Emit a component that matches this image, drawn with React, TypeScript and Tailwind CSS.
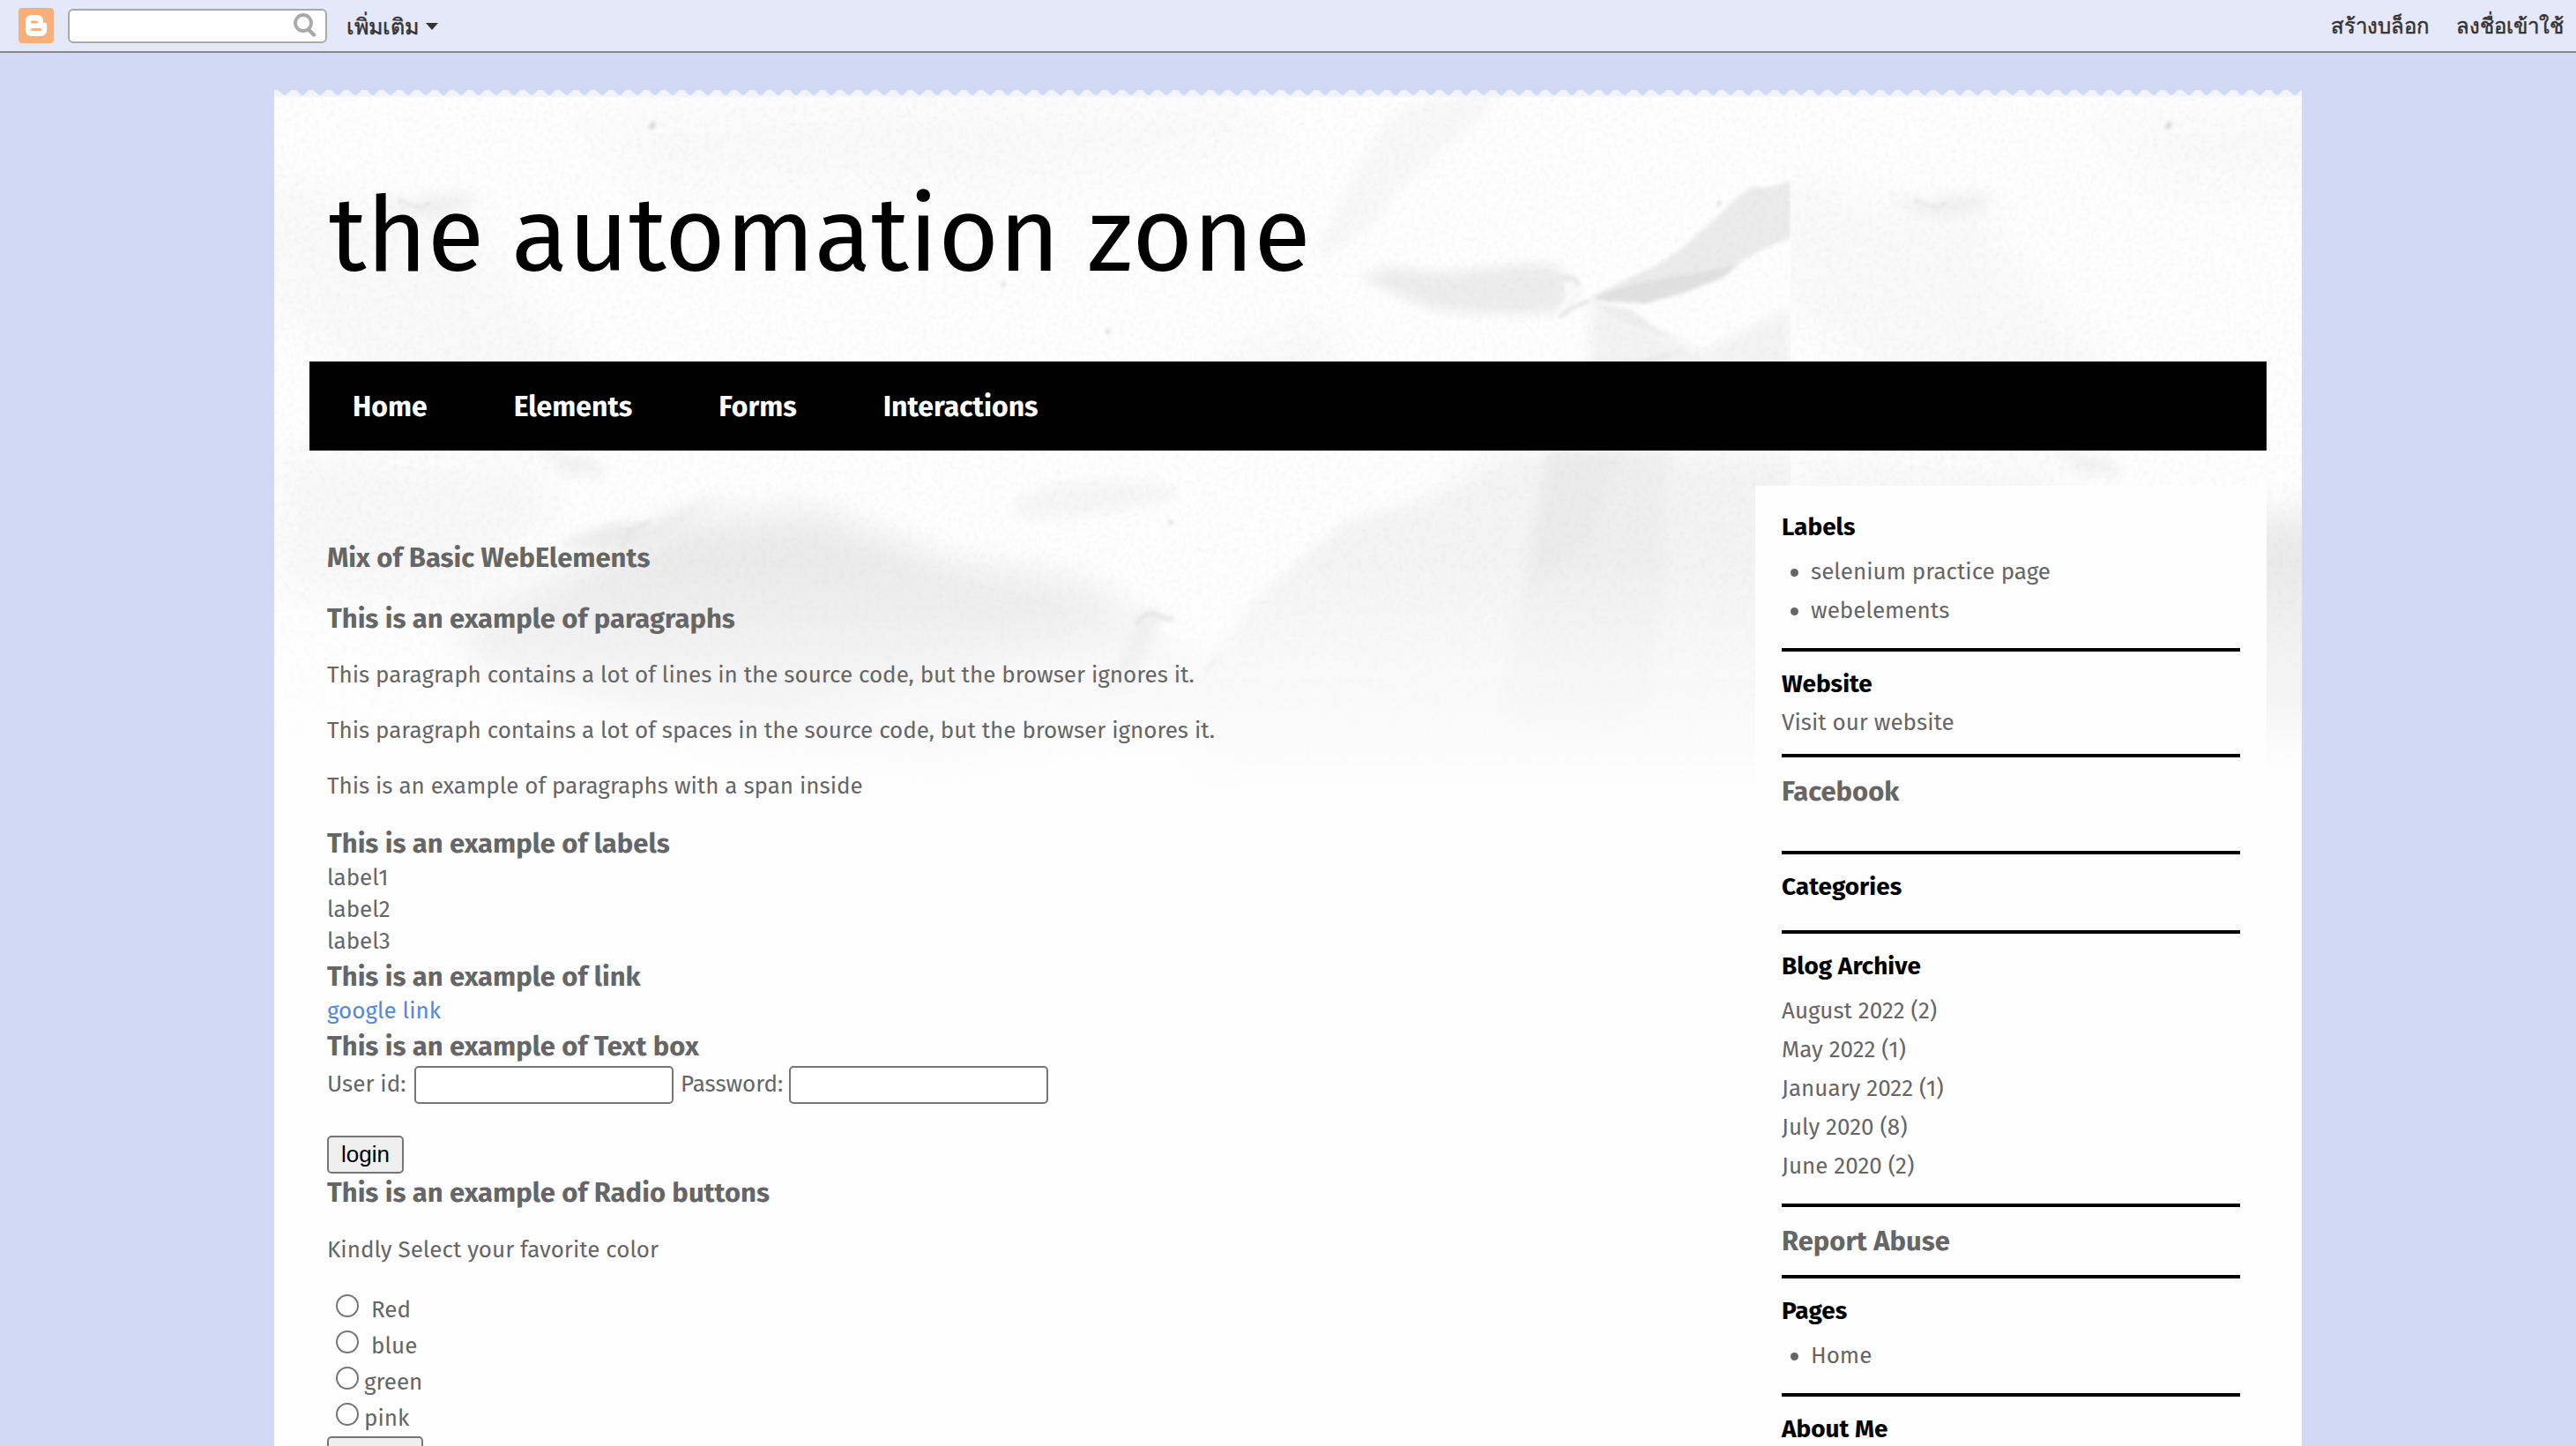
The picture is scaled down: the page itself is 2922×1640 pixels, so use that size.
import type { ReactNode } from "react";

function BloggerLogo() {
  return (
    <svg viewBox="0 0 40 40" className="size-10" aria-hidden="true">
      <rect width="40" height="40" rx="4" fill="#f5b07c" />
      <path
        fill="#fff"
        d="M15 8h6.500c4 0 6.500 3 6.500 6.500v1.200c0 .9.600 1.300 1.500 1.300h1.300c.9 0 1.400.5 1.400 1.400v6.400c0 4.200-3 7.200-7.200 7.200H15c-4.200 0-7-3-7-7.200V15.200C8 11 10.800 8 15 8z"
      />
      <path d="M15.500 16h5M15.500 24.500h9" stroke="#f5b07c" strokeWidth="3.200" strokeLinecap="round" />
    </svg>
  );
}

function SearchIcon() {
  return (
    <svg viewBox="0 0 26 28" className="h-7 w-[26px]" fill="none" stroke="#a9a9a9" aria-hidden="true">
      <ellipse cx="11" cy="11" rx="9" ry="9" strokeWidth="3.800" />
      <path d="M17 18.500l6 6" strokeWidth="4.500" strokeLinecap="round" />
    </svg>
  );
}

function TornEdge() {
  return (
    <svg className="block h-2 w-full" aria-hidden="true">
      <defs>
        <pattern id="teeth" width="20" height="8" patternUnits="userSpaceOnUse">
          <path d="M0 0h4L11 6h2L19 0.500 20 0V8H0z" fill="#fff" fillOpacity="0.720" />
        </pattern>
      </defs>
      <rect width="100%" height="8" fill="url(#teeth)" />
    </svg>
  );
}

function CrumpledPaper() {
  return (
    <svg className="absolute inset-x-0 top-2 -z-10 h-[850px] w-full" aria-hidden="true">
      <defs>
        <filter id="soft" x="-20%" y="-20%" width="140%" height="140%">
          <feGaussianBlur stdDeviation="20" />
        </filter>
        <filter id="mid" x="-20%" y="-20%" width="140%" height="140%">
          <feGaussianBlur stdDeviation="7" />
        </filter>
        <filter id="crisp" x="-20%" y="-20%" width="140%" height="140%">
          <feGaussianBlur stdDeviation="2" />
        </filter>
        <filter id="grain" x="0" y="0" width="100%" height="100%">
          <feTurbulence type="fractalNoise" baseFrequency="0.170" numOctaves="2" seed="4" />
          <feColorMatrix values="0 0 0 0 0.500  0 0 0 0 0.500  0 0 0 0 0.500  0.200 0 0 0 -0.090" />
        </filter>
        <linearGradient id="fade" x1="0" y1="0" x2="0" y2="1">
          <stop offset="0.620" stopColor="#fff" />
          <stop offset="0.760" stopColor="#fff" stopOpacity="0.550" />
          <stop offset="0.940" stopColor="#fff" stopOpacity="0" />
        </linearGradient>
        <mask id="fadeMask" maskUnits="userSpaceOnUse" x="0" y="0" width="3440" height="850">
          <rect width="3440" height="850" fill="url(#fade)" />
        </mask>
        <clipPath id="sheetClip">
          <rect width="1720" height="850" />
        </clipPath>
        <g id="sheet" clipPath="url(#sheetClip)">
          <g filter="url(#soft)">
            <path d="M-20 80L110 120 220 112 260 200 380 310 300 420 120 330-20 240z" fill="#f9f9f9" />
            <path d="M330 20L700-10 1120 0 1140 60 800 120 420 110z" fill="#fafafa" />
            <path d="M210 600L460 480 614 470 768 530 908 550 985 590 980 650 900 720 768 760 500 730 219 640z" fill="#eaeaea" />
            <path d="M0 400L280 420 330 460 200 600 0 560z" fill="#f8f8f8" />
            <path d="M980 600L1060 640 1060 720 780 730 600 700z" fill="#f4f4f4" />
            <path d="M1050 310L1180 250 1220 300 1150 330 1020 340z" fill="#f8f8f8" />
            <path d="M1280 480L1405 400 1740 400V800H1050V700L1120 600z" fill="#f3f3f3" />
          </g>
          <g filter="url(#mid)">
            <path d="M1286 8L1400-10 1340 50 1280 100 1240 150 1195 180 1178 183 1210 117 1244 50z" fill="#f8f8f8" />
            <path d="M1405 412L1352 438 1312 461 1220 478 1153 534 1107 578 1062 650 1040 740 1400 740 1430 600 1450 412z" fill="#f4f4f4" />
            <path d="M1445 400H1584L1577 528 1558 700 1480 740 1390 700 1425 511z" fill="#efefef" />
            <path d="M1445 400H1530L1500 500 1425 560 1425 511z" fill="#ebebeb" />
            <path d="M840 458Q880 432 960 435T1020 455Q940 480 840 478z" fill="#f6f6f6" />
            <path d="M1494 232L1560 262 1620 290 1720 240V340H1490z" fill="#f3f3f3" />
            <path d="M318 508L384 484 428 486 515 448 439 500 395 514z" fill="#ebebeb" />
            <path d="M110 110L150 122 190 110 230 112 220 126 180 138 140 132z" fill="#f1f1f1" />
            <path d="M300 400L360 410 380 430 330 428z" fill="#f1f1f1" />
            <path d="M975 600Q985 580 1005 586L980 655 940 680z" fill="#e9e9e9" />
            <path d="M1234 205Q1260 190 1290 196T1390 193 1461 199L1477 213 1456 245Q1400 248 1357 245T1296 233 1234 207z" fill="#ececec" />
          </g>
          <g filter="url(#crisp)">
            <path d="M1494 227Q1530 208 1555 197T1602 167 1650 123 1683 102 1720 95V160Q1690 170 1664 187L1650 200 1602 220 1555 235z" fill="#ebebeb" />
            <path d="M1494 228Q1540 210 1590 203T1660 190L1645 204 1600 222 1555 234 1510 232z" fill="#e0e0e0" />
            <path d="M1494 234L1540 241Q1570 268 1600 280L1530 256z" fill="#eeeeee" />
            <path d="M1490 310V300Q1540 300 1565 294T1600 287Q1570 300 1560 310z" fill="#ebebeb" />
            <path d="M1462 208L1478 210 1488 224 1466 240 1456 246 1466 228z" fill="#fafafa" />
            <path d="M1460 206L1474 205 1480 214M1458 250L1472 239 1492 231" fill="none" stroke="#dddddd" strokeWidth="3" />
            <path d="M978 598Q990 582 1000 587T1020 592" fill="none" stroke="#dedede" strokeWidth="5" />
            <path d="M1000 602L1025 597 1050 612 1035 618z" fill="#fdfdfd" />
            <path d="M1057 654L1068 636" stroke="#d8d8d8" strokeWidth="2" />
            <path d="M395 512L402 492 425 482" fill="none" stroke="#e3e3e3" strokeWidth="3" />
            <path d="M140 116L165 126 178 120" fill="none" stroke="#e6e6e6" strokeWidth="3" />
            <path d="M427 36l4-7M1016 481l2 3M1638 119l2 3M826 211l2 3M945 264l1 4" stroke="#c8c8c8" strokeWidth="4" />
          </g>
          <rect width="1720" height="850" filter="url(#grain)" />
        </g>
      </defs>
      <g mask="url(#fadeMask)">
        <use href="#sheet" />
        <use href="#sheet" x="1720" />
      </g>
    </svg>
  );
}

function Heading({ children, className = "" }: { children: ReactNode; className?: string }) {
  return <h3 className={`text-[31px] leading-[43px] font-bold ${className}`}>{children}</h3>;
}

function Widget({ title, children, className = "pb-5" }: { title: string; children?: ReactNode; className?: string }) {
  return (
    <section className={`border-b-4 border-black pt-[17px] ${className}`}>
      <h2 className="text-[28px] leading-10 font-bold text-black">{title}</h2>
      {children}
    </section>
  );
}

const field = "h-[43px] w-[294px] rounded-[5px] border-2 border-[#767676] bg-white px-1";
const button =
  "h-[43px] rounded-[5px] border-2 border-[#767676] bg-[#efefef] px-[14px] font-['Liberation_Sans',sans-serif] leading-[39px] text-black";

const archive = ["August 2022 (2)", "May 2022 (1)", "January 2022 (1)", "July 2020 (8)", "June 2020 (2)"];
const colors = [
  { id: "red", label: "Red", gap: "ml-[14px]" },
  { id: "blue", label: "blue", gap: "ml-[14px]" },
  { id: "green", label: "green", gap: "ml-[6px]" },
  { id: "pink", label: "pink", gap: "ml-[6px]" },
];

function BulletList({ items }: { items: string[] }) {
  return (
    <ul className="mt-[9px] leading-[44px]">
      {items.map((item) => (
        <li key={item} className="flex items-center pl-[10px]">
          <span className="mr-[14px] size-[9px] rounded-full bg-[#666]" />
          <a href="#">{item}</a>
        </li>
      ))}
    </ul>
  );
}

export default function App() {
  return (
    <div className="flex h-screen flex-col overflow-hidden bg-[#d2d9f5] font-['Fira_Sans','Open_Sans',sans-serif] text-[26px] leading-[36px] text-[#666]">
      <header className="flex h-[60px] shrink-0 items-center border-b-2 border-[#88888c] bg-[#e4e8f9] pr-[14px] pl-[21px] font-['Liberation_Sans',sans-serif] text-[26px] font-medium text-[#333]">
        <a href="#" aria-label="Blogger">
          <BloggerLogo />
        </a>
        <form className="ml-4 flex h-[39px] w-[294px] items-center rounded-[6px] border-2 border-[#a9a9a9] bg-white pr-[10px]">
          <input type="text" aria-label="Search this blog" className="h-full min-w-0 flex-1 px-2 outline-none" />
          <button type="button" aria-label="Search">
            <SearchIcon />
          </button>
        </form>
        <button type="button" className="ml-[22px] flex items-center gap-2 pt-px text-[25px] [-webkit-text-stroke:0.5px_#333]">
          เพิ่มเติม
          <svg viewBox="0 0 14 8" className="h-2 w-[14px]" fill="#333" aria-hidden="true">
            <path d="M0 0h14L7 8z" />
          </svg>
        </button>
        <nav className="ml-auto flex gap-[30px] pt-px text-[24px] [-webkit-text-stroke:0.5px_#333]">
          <a href="#">สร้างบล็อก</a>
          <a href="#">ลงชื่อเข้าใช้</a>
        </nav>
      </header>

      <div className="relative isolate mx-auto mt-[42px] flex w-full max-w-[2300px] flex-1 flex-col">
        <TornEdge />
        <div className="absolute inset-x-0 top-2 bottom-0 -z-20 bg-[#fefefe]" />
        <CrumpledPaper />

        <h1 className="px-[62px] pt-[86px] pb-[70px] text-[118px] leading-[144px] text-black">the automation zone</h1>

        <nav className="mx-10 flex h-[101px] shrink-0 items-center bg-black text-[32px] font-bold text-white">
          {["Home", "Elements", "Forms", "Interactions"].map((item) => (
            <a key={item} href="#" className="px-[49px]">
              {item}
            </a>
          ))}
        </nav>

        <div className="mx-10 mt-10 flex min-h-0 flex-1">
          <main className="flex-1 px-5 pt-[60px]">
            <Heading>Mix of Basic WebElements</Heading>
            <Heading className="mt-[26px]">This is an example of paragraphs</Heading>
            <div className="my-[25px] flex flex-col gap-[27px]">
              <p>This paragraph contains a lot of lines in the source code, but the browser ignores it.</p>
              <p>This paragraph contains a lot of spaces in the source code, but the browser ignores it.</p>
              <p>
                This is an example of paragraphs <span>with a span inside</span>
              </p>
            </div>
            <Heading>This is an example of labels</Heading>
            <p>label1</p>
            <p>label2</p>
            <p>label3</p>
            <Heading>This is an example of link</Heading>
            <a href="#" className="block text-[#5588dd]">
              google link
            </a>
            <Heading>This is an example of Text box</Heading>
            <form>
              <div className="mb-9 flex h-11 items-end">
                <label htmlFor="user" className="w-[99px] pb-1">
                  User id:
                </label>
                <input id="user" type="text" className={field} />
                <label htmlFor="pass" className="ml-2 w-[123px] pb-1">
                  Password:
                </label>
                <input id="pass" type="password" className={field} />
              </div>
              <button type="button" className={`${button} block`}>
                login
              </button>
            </form>
            <Heading>This is an example of Radio buttons</Heading>
            <form>
              <p className="mt-[26px] mb-[29px]">Kindly Select your favorite color</p>
              {colors.map((color) => (
                <div key={color.id} className="flex h-[41px] items-baseline pl-[10px] leading-[41px]">
                  <input
                    id={color.id}
                    type="radio"
                    name="color"
                    className="size-[26px] appearance-none rounded-full border-2 border-[#767676] bg-white"
                  />
                  <label htmlFor={color.id} className={color.gap}>
                    {color.label}
                  </label>
                </div>
              ))}
              <button type="button" className={`${button} block`}>
                submit
              </button>
            </form>
          </main>

          <aside className="w-[580px] shrink-0 self-start bg-[#fefefe] px-[30px] pt-[10px]">
            <Widget title="Labels">
              <BulletList items={["selenium practice page", "webelements"]} />
            </Widget>
            <Widget title="Website" className="pb-[13px]">
              <a href="#" className="mt-[2px] block leading-[44px]">
                Visit our website
              </a>
            </Widget>
            <section className="border-b-4 border-black pt-[17px] pb-[46px]">
              <Heading>Facebook</Heading>
            </section>
            <Widget title="Categories" className="pb-[29px]" />
            <Widget title="Blog Archive">
              <ul className="mt-[9px] leading-[44px]">
                {archive.map((month) => (
                  <li key={month}>
                    <a href="#">{month}</a>
                  </li>
                ))}
              </ul>
            </Widget>
            <section className="border-b-4 border-black pt-[17px] pb-[17px]">
              <Heading>
                <a href="#">Report Abuse</a>
              </Heading>
            </section>
            <Widget title="Pages">
              <BulletList items={["Home"]} />
            </Widget>
            <Widget title="About Me" />
          </aside>
        </div>
      </div>
    </div>
  );
}
